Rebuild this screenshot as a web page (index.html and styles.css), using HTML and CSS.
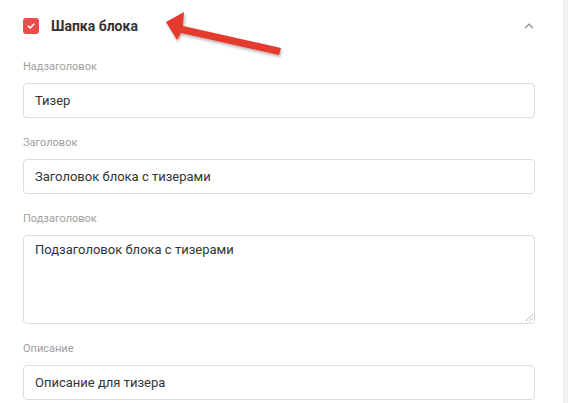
FILE: index.html
```html
<!DOCTYPE html>
<html lang="ru">
<head>
<meta charset="utf-8">
<link rel="stylesheet" href="styles.css">
</head>
<body>
<div class="page">
  <div class="panel">
    <div class="header">
      <span class="check">
        <svg width="10" height="10" viewBox="0 0 10 10"><path d="M2.3 5.2 L4.2 7 L7.8 3.2" fill="none" stroke="#fff" stroke-width="1.6" stroke-linecap="round" stroke-linejoin="round"/></svg>
      </span>
      <span class="title">Шапка блока</span>
      <svg class="chev" width="10" height="6" viewBox="0 0 10 6"><path d="M1 5 L5 1.2 L9 5" fill="none" stroke="#9a9a9a" stroke-width="1.5"/></svg>
    </div>
    <div class="fields">
      <div class="field">
        <div class="label">Надзаголовок</div>
        <div class="input">Тизер</div>
      </div>
      <div class="field">
        <div class="label">Заголовок</div>
        <div class="input">Заголовок блока с тизерами</div>
      </div>
      <div class="field">
        <div class="label">Подзаголовок</div>
        <div class="input textarea">Подзаголовок блока с тизерами
          <svg class="grip" width="9" height="9" viewBox="0 0 9 9"><path d="M8.5 1.5 L1.5 8.5 M8.5 5 L5 8.5" stroke="#777" stroke-width="1" stroke-dasharray="1 1"/></svg>
        </div>
      </div>
      <div class="field">
        <div class="label">Описание</div>
        <div class="input">Описание для тизера</div>
      </div>
    </div>
  </div>
  <div class="stripe"></div>
  <svg class="arrow" width="568" height="80" viewBox="0 0 568 80">
    <defs>
      <filter id="sh" x="-10%" y="-30%" width="130%" height="180%">
        <feDropShadow dx="1" dy="2" stdDeviation="1.5" flood-color="#000" flood-opacity="0.3"/>
      </filter>
    </defs>
    <polygon points="166,22 184,12 183,26 281,48 279,55 181,33 177,40" fill="#e53a2f" filter="url(#sh)"/>
  </svg>
</div>
</body>
</html>
```
FILE: styles.css
```css
html, body {
  margin: 0;
  padding: 0;
  background: #fff;
}
.page {
  display: flex;
  width: 568px;
  height: 403px;
  overflow: hidden;
  position: relative;
}
.panel {
  flex: 1;
  padding: 0 28px 0 23px;
}
.stripe {
  width: 5px;
  background: #f0f0f0;
}
.header {
  display: flex;
  align-items: center;
  height: 51px;
}
.check {
  width: 16px;
  height: 16px;
  border-radius: 3px;
  background: #ef4b4b;
  display: flex;
  align-items: center;
  justify-content: center;
}
.title {
  margin-left: 12px;
  font-family: Roboto, sans-serif;
  font-weight: 700;
  font-size: 14px;
  line-height: 18px;
  padding-top: 1px;
  color: #333;
  flex: 1;
}
.chev {
  margin-right: 1px;
}
.fields {
  display: flex;
  flex-direction: column;
  gap: 18px;
  padding-top: 9px;
}
.label {
  font-family: Roboto, sans-serif;
  font-size: 11px;
  line-height: 14px;
  color: #9e9e9e;
  margin-bottom: 9px;
}
.input {
  box-sizing: border-box;
  height: 35px;
  border: 1px solid #dcdcdc;
  border-radius: 4px;
  padding: 0 11px;
  font-family: Roboto, sans-serif;
  font-size: 13px;
  line-height: 33px;
  color: #333;
  position: relative;
}
.textarea {
  height: 89px;
  line-height: 16px;
  padding-top: 6px;
}
.grip {
  position: absolute;
  right: 1px;
  bottom: 1px;
}
.arrow {
  position: absolute;
  left: 0;
  top: 0;
}
```
